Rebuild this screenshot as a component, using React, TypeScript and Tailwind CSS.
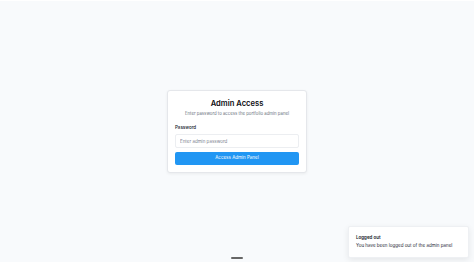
import { useState } from "react";

export default function App() {
  const [password, setPassword] = useState("");

  return (
    <div
      className="relative flex min-h-screen items-center justify-center border-t border-white bg-[#f8fafc] text-[#0f172a]"
      style={{ fontFamily: "Inter, 'Noto Sans', sans-serif" }}
    >
      <div className="w-[140px] rounded-[3px] border border-[#e5e7eb] bg-white px-[7px] pb-[7px] pt-[8px] shadow-[0_1px_3px_rgba(0,0,0,0.06)]">
        <h1 className="text-center text-[7.6px] font-semibold leading-[10px] text-[#0b0b0f]">Admin Access</h1>
        <p className="mt-[2px] text-center text-[4.3px] leading-[6px] text-[#6b7280]">
          Enter password to access the portfolio admin panel
        </p>
        <label htmlFor="admin-password" className="mt-[8px] block text-[4.5px] font-medium leading-[6px] text-[#111827]">
          Password
        </label>
        <input
          id="admin-password"
          type="password"
          placeholder="Enter admin password"
          value={password}
          onChange={(e) => setPassword(e.target.value)}
          className="mt-[3px] block h-[14px] w-full rounded-[2px] border border-[#eceef1] bg-white px-[4px] text-[4.5px] outline-none placeholder:text-[#7c8390]"
        />
        <button className="mt-[4px] block h-[13px] w-full rounded-[2px] bg-[#2196f3] text-[4.5px] font-normal text-white">
          Access Admin Panel
        </button>
      </div>

      <div className="absolute bottom-[4px] right-[5px] w-[121px] rounded-[2px] border border-[#eef0f3] bg-white px-[7px] pb-[8px] pt-[8px] shadow-[0_2px_6px_rgba(0,0,0,0.08)]">
        <div className="text-[4.5px] font-semibold leading-[6px] text-[#111827]">Logged out</div>
        <div className="mt-[2px] text-[4.5px] leading-[6px] text-[#1f2937]">You have been logged out of the admin panel</div>
      </div>

      <div className="absolute bottom-[3px] left-1/2 h-[2px] w-[12px] -translate-x-1/2 rounded-full bg-[#666]" />
    </div>
  );
}
